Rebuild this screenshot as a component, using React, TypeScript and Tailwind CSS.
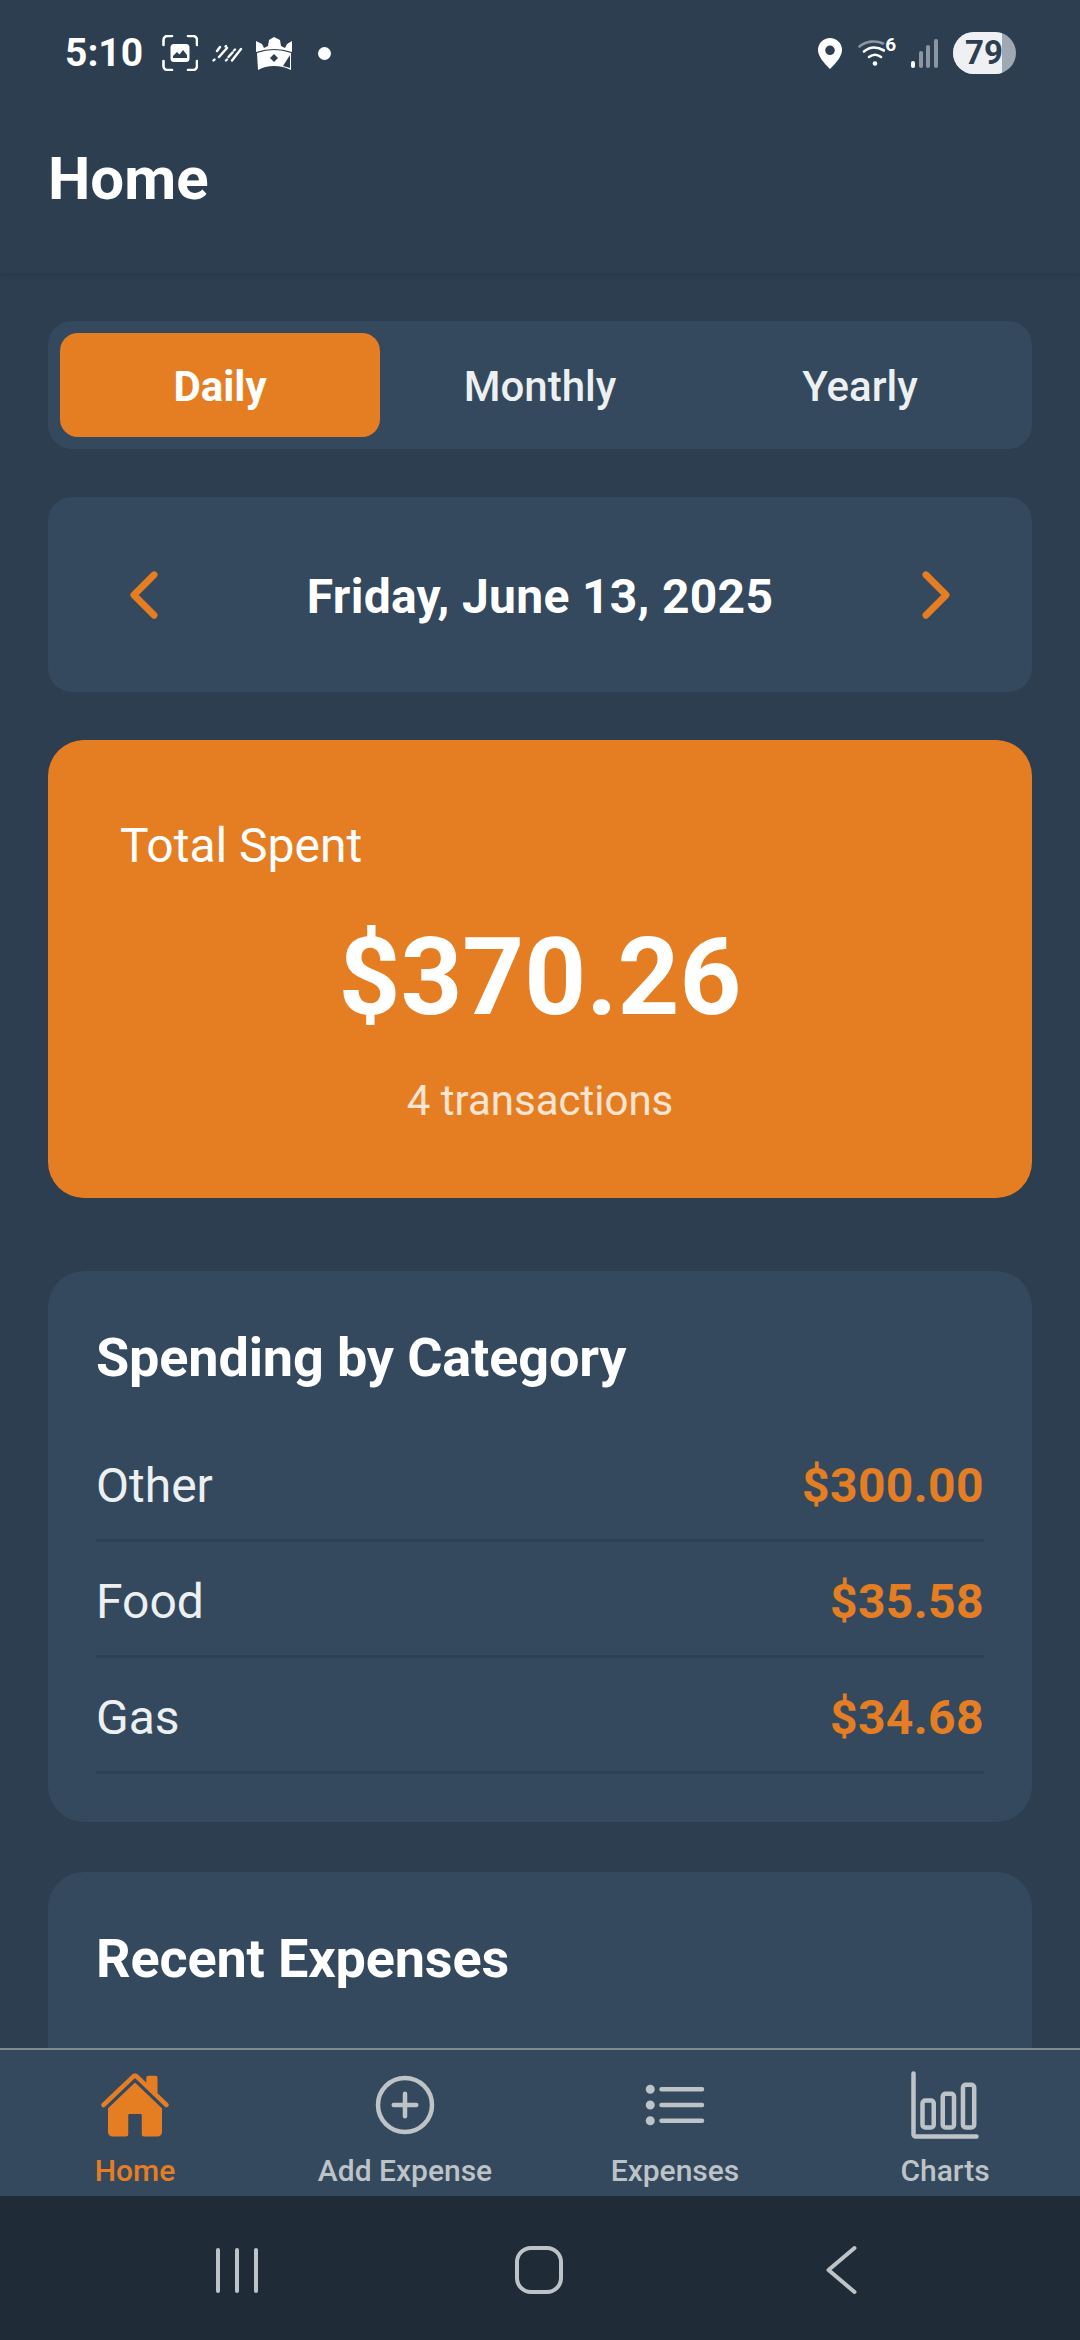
import { IoHome, IoAddCircleOutline, IoListOutline, IoBarChartOutline, IoChevronBack, IoChevronForward } from 'react-icons/io5'

const categories = [
  { name: 'Other', amount: '$300.00' },
  { name: 'Food', amount: '$35.58' },
  { name: 'Gas', amount: '$34.68' },
]

function StatusLeftIcons() {
  return (
    <div className="flex items-center">
      {/* screenshot */}
      <svg width="36" height="36" viewBox="0 0 36 36" className="ml-[19px]" fill="none">
        <path d="M1.500 10V5a4 4 0 0 1 4-4H10M26 1h5a4 4 0 0 1 4 4v5M35 26v5a4 4 0 0 1-4 4h-5M10 35H5.500a4 4 0 0 1-4-4v-5" stroke="white" strokeWidth="2.600" strokeLinecap="round" />
        <path d="M12 9h12a3.500 3.500 0 0 1 3.500 3.500v11a3.500 3.500 0 0 1-3.500 3.500H12a3.500 3.500 0 0 1-3.500-3.500v-11A3.500 3.500 0 0 1 12 9z" fill="white" />
        <path d="M11 23v-2l4-4 2.500 2.500L21 15l4 5v3z" fill="#2c3e50" />
      </svg>
      {/* rain streaks */}
      <svg width="31" height="18" viewBox="0 0 31 18" className="ml-[14px]" fill="none" stroke="white" strokeWidth="2.400" strokeLinecap="round">
        <path d="M5 7l3-4M1.500 16.500l1-1M7 13l8-9M13.500 2.500l.5-.5M14 16.500l1-1M16.500 13l4-4.500M22 6.500l1-1M20 16.500L29 5" />
      </svg>
      {/* crown app icon */}
      <svg width="36" height="33" viewBox="0 0 36 33" className="ml-[13px]" fill="white">
        <path d="M0 4l6 3 2 4 4-2 1-6 5-3 6 3 1 6 4 2 2-4 5-3v11q-18-6-36 0z" />
        <path d="M1 16q17-6 34 0v17q-8-4-17-4t-16 4z" />
        <path d="M18 17l4 4-4 4-4-4z" fill="#2c3e50" />
        <path d="M34 18l-7 11 7 2z" fill="#2c3e50" />
      </svg>
      <div className="ml-[26px] w-[13px] h-[13px] rounded-full bg-white" />
    </div>
  )
}

function StatusRightIcons() {
  return (
    <div className="flex items-center">
      {/* location pin */}
      <svg width="24" height="31" viewBox="0 0 24 31">
        <path fillRule="evenodd" fill="white" d="M12 0a12 12 0 0 1 12 12c0 6.500-6 13-12 19C6 25 0 18.500 0 12A12 12 0 0 1 12 0zm0 7.500a4.800 4.800 0 1 0 0 9.600 4.800 4.800 0 0 0 0-9.600z" />
      </svg>
      {/* wifi 6 */}
      <svg width="27" height="28" viewBox="0 0 27 28" className="ml-[16px]" fill="none" strokeLinecap="round">
        <path d="M1.500 7.500C8 2 18 1 25 4.500" stroke="#8c96a2" strokeWidth="2.600" />
        <path d="M6 12.500c6-5 13-5 20-1" stroke="white" strokeWidth="2.600" />
        <path d="M11 18c4-3 8-3 12 0" stroke="white" strokeWidth="2.600" />
        <circle cx="17" cy="24.500" r="2.300" fill="white" />
      </svg>
      <span className="mt-[-18px] text-white text-[19px] font-bold leading-none">6</span>
      {/* signal */}
      <div className="ml-[15px] flex items-end gap-[3.670px] h-[30px]">
        <div className="w-[4px] h-[7px] rounded-sm bg-white" />
        <div className="w-[4px] h-[17px] rounded-sm bg-[#8c96a2]" />
        <div className="w-[4px] h-[23px] rounded-sm bg-[#8c96a2]" />
        <div className="w-[4px] h-[29px] rounded-sm bg-[#8c96a2]" />
      </div>
      {/* battery */}
      <div className="ml-[15px] w-[63px] h-[42px] rounded-full bg-[#a0a8b3] overflow-hidden relative">
        <div className="w-[49px] h-full bg-[#eef0f3]" />
        <span className="absolute left-[12px] top-0 leading-[42px] text-[33px] font-bold text-[#2c3e50]">79</span>
      </div>
    </div>
  )
}

function NavItem({ label, active, children }: { label: string; active?: boolean; children: React.ReactNode }) {
  return (
    <div className={`flex-1 flex flex-col items-center ${active ? 'text-[#e57e23]' : 'text-[#bdc3c7]'}`}>
      <div className="h-[72px] flex items-center justify-center">{children}</div>
      <span className="mt-[12px] text-[30px] leading-[36px] font-medium">{label}</span>
    </div>
  )
}

export default function App() {
  return (
    <div className="w-[1080px] h-[2340px] flex flex-col overflow-hidden bg-[#2c3e50] text-white font-['Roboto',sans-serif]">
      {/* Header */}
      <div className="h-[273px] shrink-0 relative z-10 bg-[#2c3e50] shadow-[0_3px_6px_rgba(0,0,0,0.08)]">
        <div className="flex justify-between items-center pl-[65px] pr-[64px] pt-[28px] h-[78px]">
          <div className="flex items-center">
            <span className="text-[39px] font-bold leading-none">5:10</span>
            <StatusLeftIcons />
          </div>
          <StatusRightIcons />
        </div>
        <h1 className="mt-[66px] pl-[48px] text-[60px] leading-[70px] font-bold">Home</h1>
      </div>

      {/* Content */}
      <div className="flex-1 min-h-0 overflow-hidden px-[48px] pt-[48px] flex flex-col">
        <div className="shrink-0 h-[128px] rounded-[24px] bg-[#34495e] p-[12px] flex">
          <div className="flex-1 pt-[3px] rounded-[18px] bg-[#e57e23] flex items-center justify-center text-[42px] font-bold">Daily</div>
          <div className="flex-1 pt-[3px] flex items-center justify-center text-[42px] font-medium text-[#ecf0f1]">Monthly</div>
          <div className="flex-1 pt-[3px] flex items-center justify-center text-[42px] font-medium text-[#ecf0f1]">Yearly</div>
        </div>

        <div className="shrink-0 mt-[48px] h-[195px] rounded-[24px] bg-[#34495e] flex items-center justify-between px-[60px]">
          <IoChevronBack size={72} color="#e57e23" />
          <span className="pt-[4px] text-[48px] font-bold tracking-[0.3px]">Friday, June 13, 2025</span>
          <IoChevronForward size={72} color="#e57e23" />
        </div>

        <div className="shrink-0 mt-[48px] h-[458px] rounded-[36px] bg-[#e57e23] px-[72px] pt-[78px]">
          <p className="text-[48px] leading-[56px]">Total Spent</p>
          <p className="mt-[40px] text-center text-[108px] leading-[126px] font-bold">$370.26</p>
          <p className="mt-[36px] text-center text-[42px] leading-[50px] text-white/80">4 transactions</p>
        </div>

        <div className="shrink-0 mt-[73px] rounded-[36px] bg-[#34495e] p-[48px]">
          <h2 className="mt-[7px] mb-[36px] text-[54px] leading-[64px] font-bold tracking-[-0.15px]">Spending by Category</h2>
          {categories.map(c => (
            <div key={c.name} className="h-[116px] pt-[6px] flex items-center justify-between border-b-[3px] border-[#2e4053]">
              <span className="text-[48px] text-[#ecf0f1]">{c.name}</span>
              <span className="text-[48px] font-bold text-[#e57e23] tracking-[0.4px]">{c.amount}</span>
            </div>
          ))}
        </div>

        <div className="shrink-0 mt-[50px] rounded-[36px] bg-[#34495e] p-[48px] h-[400px]">
          <h2 className="mt-[7px] text-[54px] leading-[64px] font-bold tracking-[-0.15px]">Recent Expenses</h2>
        </div>
      </div>

      {/* Bottom tabs */}
      <div className="shrink-0 h-[148px] bg-[#34495e] border-t-[2px] border-[#7f8c8d] flex pt-[19px] overflow-hidden">
        <NavItem label="Home" active><IoHome size={72} /></NavItem>
        <NavItem label="Add Expense"><IoAddCircleOutline size={72} /></NavItem>
        <NavItem label="Expenses"><IoListOutline size={72} /></NavItem>
        <NavItem label="Charts"><IoBarChartOutline size={72} /></NavItem>
      </div>

      {/* Android nav bar */}
      <div className="shrink-0 h-[144px] bg-[#1f2b37] flex items-center pt-[4px]">
        <div className="ml-[216px] flex gap-[15px]">
          <div className="w-[4px] h-[45px] rounded-full bg-[#bdc3c7]" />
          <div className="w-[4px] h-[45px] rounded-full bg-[#bdc3c7]" />
          <div className="w-[4px] h-[45px] rounded-full bg-[#bdc3c7]" />
        </div>
        <div className="ml-[257px] w-[48px] h-[48px] rounded-[16px] border-[4px] border-[#bdc3c7]" />
        <svg width="31" height="50" viewBox="0 0 31 50" fill="none" className="ml-[263px]">
          <path d="M28.500 3L2.500 25l26 22" stroke="#bdc3c7" strokeWidth="4" strokeLinecap="round" strokeLinejoin="round" />
        </svg>
      </div>
    </div>
  )
}
